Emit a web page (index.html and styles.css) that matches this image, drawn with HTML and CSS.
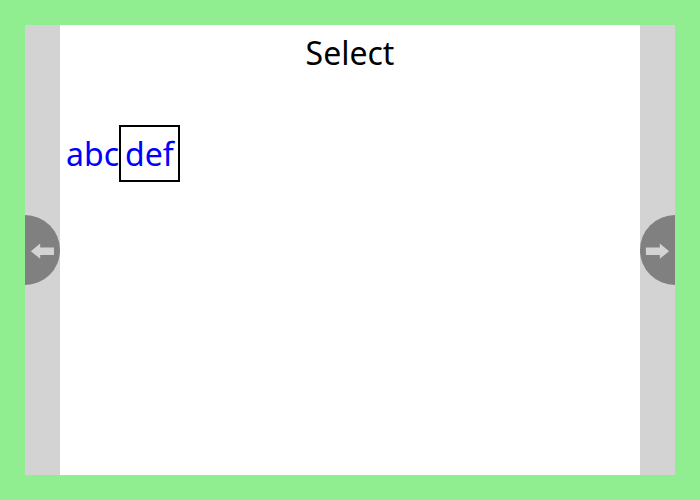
FILE: index.html
```html
<!DOCTYPE html>
<html lang="en">
<head>
<meta charset="utf-8">
<title>Select</title>
<link rel="stylesheet" href="styles.css">
</head>
<body>
<div class="frame">
  <div class="side side-left">
    <button class="nav nav-left" aria-label="Previous"><svg width="35" height="70" viewBox="0 0 35 70"><path d="M5.8 36.2L15.2 28.6V32.6H29V39.9H15.2V43.8Z"/></svg></button>
  </div>
  <main class="page">
    <h1 class="title">Select</h1>
    <div class="line"><span class="plain">abc</span><span class="boxed">def</span></div>
  </main>
  <div class="side side-right">
    <button class="nav nav-right" aria-label="Next"><svg width="35" height="70" viewBox="0 0 35 70"><path d="M29.1 36.2L19.8 28.6V32.6H5.9V39.9H19.8V43.8Z"/></svg></button>
  </div>
</div>
</body>
</html>
```
FILE: styles.css
```css
* { box-sizing: border-box; }
body {
  margin: 0;
  height: 500px;
  padding: 25px;
  background: lightgreen;
  font-family: "Noto Sans", sans-serif;
  overflow: hidden;
}
.frame { display: flex; height: 450px; background: white; }
.side { width: 35px; display: flex; align-items: center; background: lightgray; }
.nav {
  width: 35px;
  height: 70px;
  padding: 0;
  border: 0;
  background: gray;
}
.nav svg { fill: lightgray; display: block; }
.nav-left { border-radius: 0 35px 35px 0; }
.nav-right { border-radius: 35px 0 0 35px; }
.page { flex: 1; }
.title {
  margin: 0;
  height: 100px;
  padding-top: 6px;
  font-size: 32px;
  font-weight: 400;
  line-height: 44px;
  text-align: center;
}
.line { display: flex; padding-left: 6px; font-size: 32px; line-height: 44px; color: blue; }
.plain { padding-top: 7px; }
.boxed { height: 57px; padding: 5px 4px 4px; border: 2px solid black; }
```
